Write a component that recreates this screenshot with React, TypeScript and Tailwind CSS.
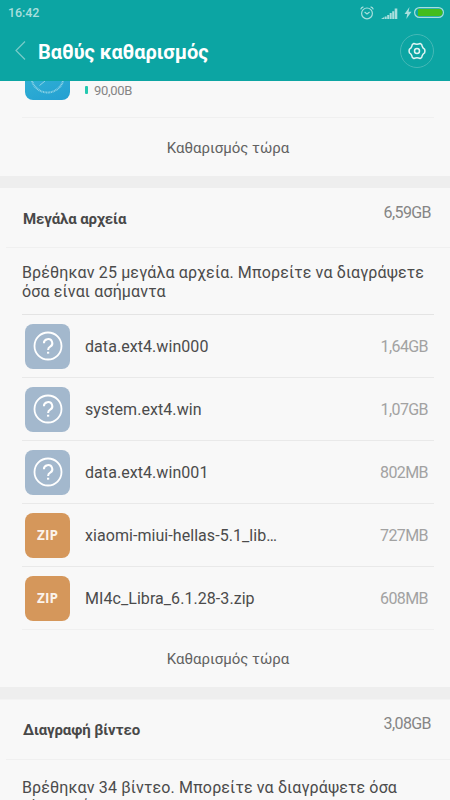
import type { ReactNode } from 'react';
import clsx from 'clsx';

interface FileItem {
  name: string;
  size: string;
  kind: 'unknown' | 'zip';
}

const files: FileItem[] = [
  { name: 'data.ext4.win000', size: '1,64GB', kind: 'unknown' },
  { name: 'system.ext4.win', size: '1,07GB', kind: 'unknown' },
  { name: 'data.ext4.win001', size: '802MB', kind: 'unknown' },
  { name: 'xiaomi-miui-hellas-5.1_lib…', size: '727MB', kind: 'zip' },
  { name: 'MI4c_Libra_6.1.28-3.zip', size: '608MB', kind: 'zip' },
];

function StatusBar() {
  return (
    <div className="flex h-[25px] items-center justify-between pl-2 pr-[6px] text-[#a9dfdd]">
      <span className="text-[12.5px] leading-[25px] font-medium tracking-[-0.1px]">16:42</span>
      <div className="flex items-center">
        <svg width="14" height="14" viewBox="0 0 14 14" fill="none" stroke="currentColor" strokeWidth="1.2">
          <circle cx="7" cy="7.4" r="5.4" />
          <path d="M.7 3.4C1 2 2 1 3.400.8M13.300 3.400C13 2 12 1 10.600.8M4.600 6L7 8l2.600-2" />
        </svg>
        <svg className="ml-[7px]" width="17" height="12" viewBox="0 0 17 12" fill="currentColor">
          <path d="M0 12l3.200-1.900V12zM3.700 9.600h2V12h-2zM6.200 8h2v4h-2zM8.700 6h2v6h-2zM11.200 4.200h2V12h-2zM13.700 1.500h2.600V12h-2.600z" />
        </svg>
        <svg className="ml-[6px]" width="8" height="12" viewBox="0 0 8 12" fill="currentColor">
          <path d="M5.500 0L.5 7h2.700L2.300 12 7.500 4.800H4.500z" />
        </svg>
        <svg className="ml-[2px]" width="30" height="11" viewBox="0 0 30 11">
          <rect x=".6" y=".6" width="28.800" height="9.800" rx="4.900" fill="none" stroke="currentColor" strokeWidth="1.200" />
          <path d="M4 2h21.500c2 0 3 1.500 3 3.500s-1 3.500-3 3.500H4z" fill="#43bd1d" />
        </svg>
      </div>
    </div>
  );
}

function TitleBar() {
  return (
    <div className="flex h-14 items-center pl-[14px] pr-4 pb-[5px]">
      <svg width="12" height="20" viewBox="0 0 12 20" fill="none" stroke="#7accc9" strokeWidth="1.2">
        <path d="M11 .5L2 9.500l9 9" />
      </svg>
      <h1 className="ml-3 pt-[3px] text-xl leading-6 font-bold tracking-[-0.06px] text-white">Βαθύς καθαρισμός</h1>
      <button className="ml-auto flex h-[34px] w-[34px] items-center justify-center rounded-full border border-[#45b8b6]">
        <svg width="18" height="18" viewBox="0 0 18 18" fill="none" stroke="#e2f5f4" strokeWidth="1.5" strokeLinejoin="round">
          <path d="M5.800 1.500Q7.500 2.200 9 2.200T12.200 1.500Q14.100 2 14.200 4.200Q14.800 6.100 16.500 7.100Q17.300 9 16.500 10.900Q14.800 11.900 14.200 13.800Q14.100 16 12.200 16.500Q10.500 15.800 9 15.800T5.800 16.500Q3.900 16 3.800 13.800Q3.200 11.900 1.500 10.900Q.7 9 1.500 7.100Q3.200 6.100 3.800 4.200Q3.900 2 5.800 1.500z" />
          <circle cx="9" cy="9" r="2.500" />
        </svg>
      </button>
    </div>
  );
}

function FileIcon({ kind }: { kind: FileItem['kind'] }) {
  if (kind === 'zip') {
    return (
      <div className="flex h-[45px] w-[45px] items-center justify-center rounded-[8px] bg-[#d5975b] pt-[2px] font-['Open_Sans',sans-serif] text-[13.5px] leading-none font-bold text-[#fbf3eb]">
        ZIP
      </div>
    );
  }
  return (
    <div className="flex h-[45px] w-[45px] items-center justify-center rounded-[8px] bg-[#a3b8cd]">
      <svg width="30" height="30" viewBox="0 0 30 30" fill="none" stroke="#fff" strokeWidth="1.800">
        <circle cx="15" cy="15" r="13.500" />
        <path d="M10.900 12.200a4.200 4 0 1 1 6.300 3.400c-1.500.9-2.100 1.600-2.100 3.400" strokeWidth="2" />
        <path d="M14 21.700h2.200" strokeWidth="1.900" />
      </svg>
    </div>
  );
}

function FileRow({ file }: { file: FileItem }) {
  return (
    <li className="flex h-[63px] items-center border-b border-[#e9e9e9] pl-[3px] pr-[6px] last:border-[#f0f0f0]">
      <FileIcon kind={file.kind} />
      <span className="ml-[15px] pt-px text-base tracking-[0.06px] text-[#4b4b4b]">{file.name}</span>
      <span className="ml-auto pt-px text-base tracking-[-0.6px] text-[#a2a2a2]">{file.size}</span>
    </li>
  );
}

function SectionHeader({ title, size, className }: { title: string; size: string; className: string }) {
  return (
    <div className={clsx('ml-[6px] flex justify-between border-b border-[#f0f0f0] pl-[17px] pr-[19px]', className)}>
      <h2 className="pt-[19px] text-[15px] leading-6 font-bold tracking-[-0.1px] text-[#484848]">{title}</h2>
      <span className="pt-[13px] text-base leading-6 tracking-[-0.6px] text-[#858585]">{size}</span>
    </div>
  );
}

function CleanButton({ children }: { children: ReactNode }) {
  return (
    <button className="flex h-full w-full items-center justify-center pl-[6px] pt-[2px] text-[15px] text-[#626262]">
      {children}
    </button>
  );
}

export default function App() {
  return (
    <div className="h-[800px] w-[450px] overflow-hidden bg-[#f8f8f8] font-[Roboto,'Noto_Sans',sans-serif]">
      <header className="h-[81px] bg-[#0ca5a3]">
        <StatusBar />
        <TitleBar />
      </header>

      <section>
        <div className="ml-[22px] mr-4 flex h-[37px] border-b border-[#f0f0f0] pl-[3px]">
          <svg width="45" height="19" viewBox="0 0 45 19">
            <defs>
              <linearGradient id="compass" x1="0" y1="0" x2="1" y2="1">
                <stop offset="0" stopColor="#2fafd3" />
                <stop offset="1" stopColor="#239fd2" />
              </linearGradient>
            </defs>
            <path d="M0 0h45v11a8 8 0 0 1-8 8H8a8 8 0 0 1-8-8z" fill="url(#compass)" />
            <path d="M7 0a16.200 16.200 0 0 0 31 0" fill="none" stroke="#8dd2e6" strokeWidth="2" strokeDasharray="1 .6" />
            <path d="M14.500 4.500L20 0" stroke="#8dd2e6" strokeWidth="1" />
          </svg>
          <span className="ml-[15px] mt-[5px] h-[8px] w-[3px] rounded-[1px] bg-[#25c9b0]" />
          <span className="ml-[6px] text-[13px] leading-[19px] tracking-[-0.3px] text-[#858585]">90,00B</span>
        </div>
        <div className="h-[58px]">
          <CleanButton>Καθαρισμός τώρα</CleanButton>
        </div>
      </section>

      <div className="h-3 bg-[#eeeeee]" />

      <section>
        <SectionHeader className="h-[60px]" title="Μεγάλα αρχεία" size="6,59GB" />
        <div className="ml-[22px] mr-4">
          <p className="h-[67px] border-b border-[#e4e4e4] pt-[15px] text-base leading-[19px] tracking-[0.14px] whitespace-nowrap text-[#4b4b4b]">
            Βρέθηκαν 25 μεγάλα αρχεία. Μπορείτε να διαγράψετε
            <br />
            όσα είναι ασήμαντα
          </p>
          <ul>
            {files.map((file) => (
              <FileRow key={file.name} file={file} />
            ))}
          </ul>
        </div>
        <div className="h-[57px]">
          <CleanButton>Καθαρισμός τώρα</CleanButton>
        </div>
      </section>

      <div className="h-3 bg-[#eeeeee]" />

      <section className="border-t border-[#f3f3f3]">
        <SectionHeader className="-mt-px h-[61px]" title="Διαγραφή βίντεο" size="3,08GB" />
        <p className="ml-[22px] pt-[18px] text-base leading-[19px] tracking-[0.14px] whitespace-nowrap text-[#4b4b4b]">
          Βρέθηκαν 34 βίντεο. Μπορείτε να διαγράψετε όσα
          <br />
          είναι ασήμαντα
        </p>
      </section>
    </div>
  );
}
